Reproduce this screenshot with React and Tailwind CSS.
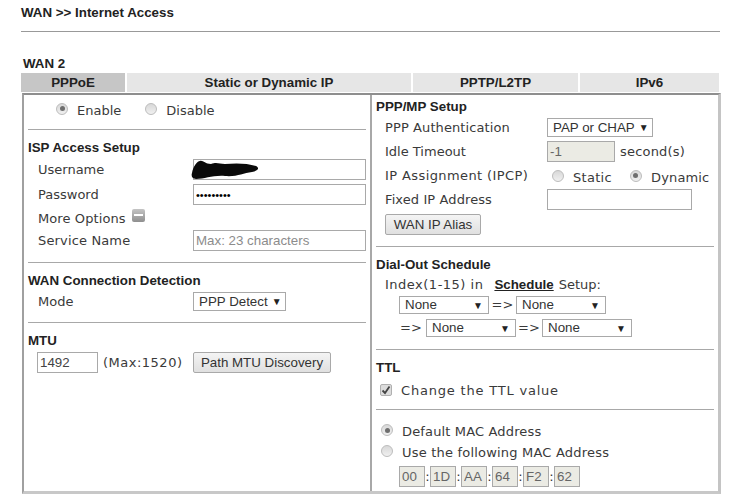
import { useState } from 'react';

const Rule = ({ className = '' }) => <div className={`h-px bg-[#a8a8a8] ${className}`} />;

const Title = ({ children, className = '' }) => (
  <div className={`h-5 pt-[2px] flex items-center whitespace-nowrap font-['Liberation_Sans',Arial,sans-serif] text-[13.33px] font-bold text-[#222] ${className}`}>
    {children}
  </div>
);

const Radio = ({ on, className = '' }) => (
  <span className={`w-3 h-3 rounded-full border border-[#bcbcbc] bg-gradient-to-b from-[#d8d8d8] to-[#f0f0f0] flex items-center justify-center shrink-0 ${className}`}>
    {on && <span className="w-[5px] h-[5px] rounded-full bg-[#6e6e6e]" />}
  </span>
);

const Select = ({ label, className = '' }) => (
  <div className={`h-full flex items-center justify-between whitespace-nowrap border border-[#a9a9a9] bg-white pl-[5px] pr-[5px] font-['Liberation_Sans',Arial,sans-serif] text-[13.33px] text-[#333] shrink-0 ${className}`}>
    <span>{label}</span>
    <span className="text-[10px] text-[#222] ml-1">▼</span>
  </div>
);

const Field = ({ value, placeholder, disabled, className = '', textClass = "text-[13.33px] text-[#444]" }) => (
  <input
    type="text"
    readOnly
    value={value}
    placeholder={placeholder}
    className={`h-[21px] border border-[#a9a9a9] px-[2px] font-['Liberation_Sans',Arial,sans-serif] placeholder:text-[#8c8c8c] outline-none shrink-0 ${textClass} ${disabled ? 'bg-[#ebebe4]' : 'bg-white'} ${className}`}
  />
);

const Btn = ({ children, className = '' }) => (
  <button className={`h-[21px] border border-[#a9a9a9] rounded-[2px] bg-gradient-to-b from-[#f4f4f4] to-[#e0e0e0] whitespace-nowrap font-['Liberation_Sans',Arial,sans-serif] text-[13.33px] text-[#333] shrink-0 ${className}`}>
    {children}
  </button>
);

export default function App() {
  const [tab] = useState('PPPoE');
  const tabs = [
    { label: 'PPPoE', w: 'w-[104px]' },
    { label: 'Static or Dynamic IP', w: 'w-[284px]' },
    { label: 'PPTP/L2TP', w: 'w-[165px]' },
    { label: 'IPv6', w: 'w-[139px]' },
  ];

  return (
    <div className="w-[744px] h-[496px] overflow-hidden bg-white pl-[21px] font-['DejaVu_Sans',Verdana,sans-serif] text-[13px] text-[#3a3a3a]">
      {/* Header */}
      <div className="h-[25px] flex items-center font-['Liberation_Sans',Arial,sans-serif] text-[13.33px] font-bold text-[#222]">
        WAN &gt;&gt; Internet Access
      </div>
      <div className="h-px w-[699px] bg-[#999] mt-[6px]" />
      <div className="h-5 mt-[21px] pl-[2px] pt-[2px] flex items-center font-['Liberation_Sans',Arial,sans-serif] text-[13.33px] font-bold text-[#222]">
        WAN 2
      </div>

      {/* Tabs */}
      <div className="flex gap-[2px] h-[19px] mb-px">
        {tabs.map(t => (
          <div
            key={t.label}
            className={`${t.w} flex items-center justify-center font-['Liberation_Sans',Arial,sans-serif] text-[13.33px] font-bold text-[#222] ${t.label === tab ? 'bg-[#c6c6c6]' : 'bg-[#e6e6e6]'}`}
          >
            {t.label}
          </div>
        ))}
      </div>

      {/* Panel */}
      <div className="ml-px w-[699px] h-[401px] flex border-t-2 border-l-2 border-t-[#8e8e8e] border-l-[#a0a0a0] border-r-[3px] border-b-[3px] border-r-[#c4c4c4] border-b-[#c8c8c8]">
        {/* Left column */}
        <div className="w-[348px] pl-[4px] pr-[4px] border-r-2 border-[#a8a8a8] flex flex-col">
          <div className="flex items-center h-[21px] mt-[5px] pl-[28px]">
            <Radio on className="-mt-[4px]" />
            <span className="ml-[9px]">Enable</span>
            <Radio className="ml-[24px] -mt-[4px]" />
            <span className="ml-[9px]">Disable</span>
          </div>
          <Rule className="mt-[8px]" />
          <Title className="mt-[7px]">ISP Access Setup</Title>

          <div className="flex items-center h-[21px] mt-[2px] pl-[10px]">
            <span className="w-[155px]">Username</span>
            <div className="relative">
              <Field className="w-[173px]" value="" />
              <svg className="absolute left-[-2px] top-0" width="70" height="21" viewBox="0 0 70 21">
                <path d="M1 14 C2 8 6 2 9 2 C12 1 14 5 20 5 C26 3 28 5 34 5 C44 4 56 4 65 7 C69 9 67 12 61 13 C52 14 46 18 34 17 C22 16 14 20 5 20 C1 20 0 17 1 14 Z" fill="#0a0a0a" />
              </svg>
            </div>
          </div>
          <div className="flex items-center h-[21px] mt-[4px] pl-[10px]">
            <span className="w-[155px]">Password</span>
            <Field className="w-[173px]" value="•••••••••" textClass="text-[11px] text-black" />
          </div>
          <div className="flex items-center h-[22px] mt-[2px] pl-[10px]">
            <span className="mt-[2px] tracking-[0.1px]">More Options</span>
            <span className="ml-[6px] -mt-[6px] w-[13px] h-[13px] rounded-[2px] bg-gradient-to-b from-[#c4c4c4] to-[#8f8f8f] flex items-center justify-center">
              <span className="w-[9px] h-[2px] bg-white" />
            </span>
          </div>
          <div className="flex items-center h-[21px] mt-px pl-[10px]">
            <span className="w-[155px] tracking-[0.15px]">Service Name</span>
            <Field className="w-[173px]" value="" placeholder="Max: 23 characters" />
          </div>
          <Rule className="mt-[11px]" />
          <Title className="mt-[7px]">WAN Connection Detection</Title>
          <div className="flex items-center h-[19px] mt-[2px] pl-[10px]">
            <span className="w-[155px]">Mode</span>
            <Select label="PPP Detect" className="w-[93px]" />
          </div>
          <Rule className="mt-[11px]" />
          <Title className="mt-[7px]">MTU</Title>
          <div className="flex items-center h-[21px] mt-[2px] pl-[9px]">
            <Field className="w-[61px]" value="1492" />
            <span className="ml-[5px] w-[90px] tracking-[0.5px]">(Max:1520)</span>
            <Btn className="w-[138px]">Path MTU Discovery</Btn>
          </div>
        </div>

        {/* Right column */}
        <div className="flex-1 pl-[4px] pr-[4px] flex flex-col">
          <Title className="mt-px">PPP/MP Setup</Title>
          <div className="flex items-center h-[19px] mt-[2px] pl-[9px]">
            <span className="w-[162px] tracking-[0.1px]">PPP Authentication</span>
            <Select label="PAP or CHAP" className="w-[106px]" />
          </div>
          <div className="flex items-center h-[21px] mt-[4px] pl-[9px]">
            <span className="w-[162px]">Idle Timeout</span>
            <Field className="w-[68px]" value="-1" disabled textClass="text-[13.33px] text-[#666]" />
            <span className="ml-[5px] tracking-[0.2px]">second(s)</span>
          </div>
          <div className="flex items-center h-[21px] mt-[3px] pl-[9px]">
            <span className="w-[167px] tracking-[0.4px]">IP Assignment (IPCP)</span>
            <Radio />
            <span className="ml-[9px] mt-[4px] tracking-[0.3px]">Static</span>
            <Radio on className="ml-[18px]" />
            <span className="ml-[9px] mt-[4px] tracking-[0.15px]">Dynamic</span>
          </div>
          <div className="flex items-center h-[21px] mt-[3px] pl-[9px]">
            <span className="w-[162px] tracking-[0.1px]">Fixed IP Address</span>
            <Field className="w-[145px]" value="" />
          </div>
          <div className="mt-[4px] pl-[9px] flex">
            <Btn className="w-[96px]">WAN IP Alias</Btn>
          </div>
          <Rule className="mt-[11px]" />
          <Title className="mt-[7px]">Dial-Out Schedule</Title>
          <div className="h-5 mt-px pl-[9px] flex items-center">
            <span className="tracking-[0.5px]">Index(1-15) in</span>
            <span className="ml-[11px] mr-[5px] font-['Liberation_Sans',Arial,sans-serif] text-[13.33px] font-bold text-[#222] underline">Schedule</span>
            <span>Setup:</span>
          </div>
          <div className="flex items-center h-[18px] mt-px pl-[23px]">
            <Select label="None" className="w-[90px]" />
            <span className="w-[27px] text-center">=&gt;</span>
            <Select label="None" className="w-[90px]" />
          </div>
          <div className="flex items-center h-[18px] mt-[5px] pl-[24px]">
            <span className="w-[26px]">=&gt;</span>
            <Select label="None" className="w-[90px]" />
            <span className="w-[26px] text-center">=&gt;</span>
            <Select label="None" className="w-[90px]" />
          </div>
          <Rule className="mt-[12px]" />
          <Title className="mt-[7px]">TTL</Title>
          <div className="flex items-center h-5 mt-[4px] pl-[4px]">
            <span className="w-3 h-3 -mt-[3px] rounded-[2px] border border-[#b0b0b0] bg-[#dcdcdc] flex items-center justify-center">
              <svg width="10" height="10" viewBox="0 0 10 10">
                <path d="M1.5 5.5 L4 8 L8.5 1.5" fill="none" stroke="#444" strokeWidth="1.8" />
              </svg>
            </span>
            <span className="ml-[9px] tracking-[0.8px]">Change the TTL value</span>
          </div>
          <Rule className="mt-[8px]" />
          <div className="flex items-center h-5 mt-[12px] pl-[5px]">
            <Radio on className="-mt-[4px]" />
            <span className="ml-[9px] tracking-[0.15px]">Default MAC Address</span>
          </div>
          <div className="flex items-center h-5 mt-px pl-[5px]">
            <Radio className="-mt-[4px]" />
            <span className="ml-[9px] tracking-[0.2px]">Use the following MAC Address</span>
          </div>
          <div className="flex items-center h-[21px] mt-[3px] pl-[23px]">
            {['00', '1D', 'AA', '64', 'F2', '62'].map((v, i) => (
              <div key={v} className="flex items-center">
                {i > 0 && <span className="w-[5px] text-center text-[#333]">:</span>}
                <Field className="w-[26px]" value={v} disabled textClass="text-[13.33px] text-[#666]" />
              </div>
            ))}
          </div>
        </div>
      </div>
    </div>
  );
}
